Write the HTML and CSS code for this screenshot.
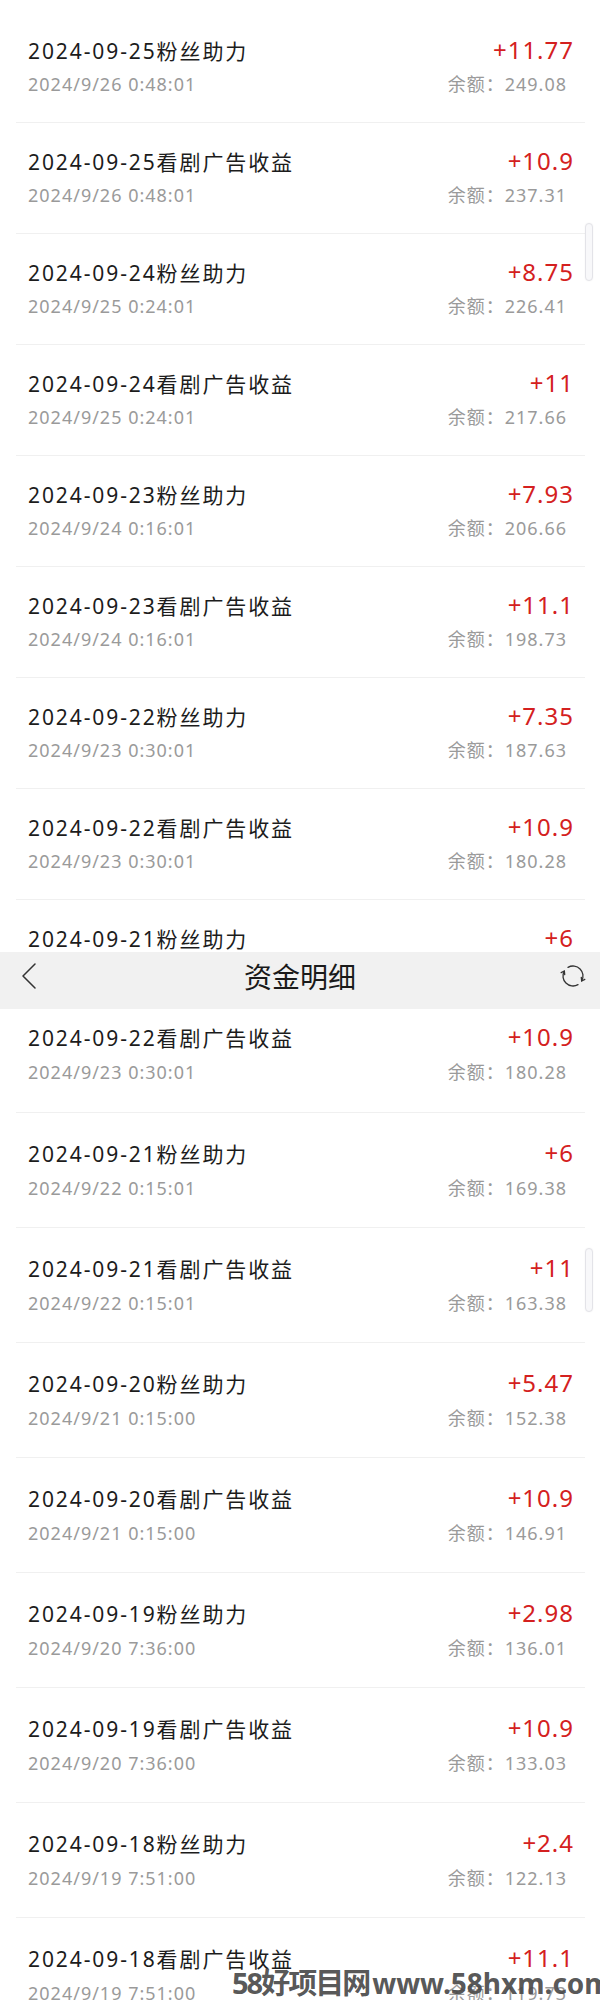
FILE: index.html
```html
<!DOCTYPE html>
<html lang="zh-CN">
<head>
<meta charset="UTF-8" />
<meta name="viewport" content="width=device-width, initial-scale=1" />
<title>资金明细</title>
<link rel="stylesheet" href="styles.css">
</head>
<body>
<div class="page">

  <!-- 上半截：列表滚动中 -->
  <section class="list-wrap list-top">
    <div class="scroll-thumb"></div>
    <ul class="list">
      <li class="item">
        <div class="item-head"><span class="item-title">2024-09-25粉丝助力</span><span class="item-amount">+11.77</span></div>
        <div class="item-meta"><span>2024/9/26 0:48:01</span><span class="item-balance">余额：249.08</span></div>
      </li>
      <li class="item">
        <div class="item-head"><span class="item-title">2024-09-25看剧广告收益</span><span class="item-amount">+10.9</span></div>
        <div class="item-meta"><span>2024/9/26 0:48:01</span><span class="item-balance">余额：237.31</span></div>
      </li>
      <li class="item">
        <div class="item-head"><span class="item-title">2024-09-24粉丝助力</span><span class="item-amount">+8.75</span></div>
        <div class="item-meta"><span>2024/9/25 0:24:01</span><span class="item-balance">余额：226.41</span></div>
      </li>
      <li class="item">
        <div class="item-head"><span class="item-title">2024-09-24看剧广告收益</span><span class="item-amount">+11</span></div>
        <div class="item-meta"><span>2024/9/25 0:24:01</span><span class="item-balance">余额：217.66</span></div>
      </li>
      <li class="item">
        <div class="item-head"><span class="item-title">2024-09-23粉丝助力</span><span class="item-amount">+7.93</span></div>
        <div class="item-meta"><span>2024/9/24 0:16:01</span><span class="item-balance">余额：206.66</span></div>
      </li>
      <li class="item">
        <div class="item-head"><span class="item-title">2024-09-23看剧广告收益</span><span class="item-amount">+11.1</span></div>
        <div class="item-meta"><span>2024/9/24 0:16:01</span><span class="item-balance">余额：198.73</span></div>
      </li>
      <li class="item">
        <div class="item-head"><span class="item-title">2024-09-22粉丝助力</span><span class="item-amount">+7.35</span></div>
        <div class="item-meta"><span>2024/9/23 0:30:01</span><span class="item-balance">余额：187.63</span></div>
      </li>
      <li class="item">
        <div class="item-head"><span class="item-title">2024-09-22看剧广告收益</span><span class="item-amount">+10.9</span></div>
        <div class="item-meta"><span>2024/9/23 0:30:01</span><span class="item-balance">余额：180.28</span></div>
      </li>
      <li class="item">
        <div class="item-head"><span class="item-title">2024-09-21粉丝助力</span><span class="item-amount">+6</span></div>
        <div class="item-meta"><span>2024/9/22 0:15:01</span><span class="item-balance">余额：169.38</span></div>
      </li>
    </ul>
  </section>

  <!-- 标题栏 -->
  <header class="nav-bar">
    <span class="nav-back">
      <svg width="14" height="26" viewBox="0 0 14 26" fill="none">
        <polyline points="13,1 1,13 13,25" stroke="#333" stroke-width="1.5" stroke-linecap="round" stroke-linejoin="round"/>
      </svg>
    </span>
    <h1 class="nav-title">资金明细</h1>
    <span class="nav-refresh">
      <svg width="28" height="28" viewBox="-1 -1 28 28" fill="none" stroke="#333" stroke-width="1.3" stroke-linecap="round" stroke-linejoin="round">
        <path d="M8 4.34 A10 10 0 0 1 21.66 18"/>
        <path d="M18 21.66 A10 10 0 0 1 4.34 8"/>
        <polyline points="1.2,9.6 4.34,8 4.7,11.6"/>
        <polyline points="24.8,16.4 21.66,18 21.3,14.4"/>
      </svg>
    </span>
  </header>

  <!-- 下半截 -->
  <section class="list-wrap list-bottom">
    <div class="scroll-thumb"></div>
    <ul class="list">
      <li class="item first">
        <div class="item-head"><span class="item-title">2024-09-22看剧广告收益</span><span class="item-amount">+10.9</span></div>
        <div class="item-meta"><span>2024/9/23 0:30:01</span><span class="item-balance">余额：180.28</span></div>
      </li>
      <li class="item">
        <div class="item-head"><span class="item-title">2024-09-21粉丝助力</span><span class="item-amount">+6</span></div>
        <div class="item-meta"><span>2024/9/22 0:15:01</span><span class="item-balance">余额：169.38</span></div>
      </li>
      <li class="item">
        <div class="item-head"><span class="item-title">2024-09-21看剧广告收益</span><span class="item-amount">+11</span></div>
        <div class="item-meta"><span>2024/9/22 0:15:01</span><span class="item-balance">余额：163.38</span></div>
      </li>
      <li class="item">
        <div class="item-head"><span class="item-title">2024-09-20粉丝助力</span><span class="item-amount">+5.47</span></div>
        <div class="item-meta"><span>2024/9/21 0:15:00</span><span class="item-balance">余额：152.38</span></div>
      </li>
      <li class="item">
        <div class="item-head"><span class="item-title">2024-09-20看剧广告收益</span><span class="item-amount">+10.9</span></div>
        <div class="item-meta"><span>2024/9/21 0:15:00</span><span class="item-balance">余额：146.91</span></div>
      </li>
      <li class="item">
        <div class="item-head"><span class="item-title">2024-09-19粉丝助力</span><span class="item-amount">+2.98</span></div>
        <div class="item-meta"><span>2024/9/20 7:36:00</span><span class="item-balance">余额：136.01</span></div>
      </li>
      <li class="item">
        <div class="item-head"><span class="item-title">2024-09-19看剧广告收益</span><span class="item-amount">+10.9</span></div>
        <div class="item-meta"><span>2024/9/20 7:36:00</span><span class="item-balance">余额：133.03</span></div>
      </li>
      <li class="item">
        <div class="item-head"><span class="item-title">2024-09-18粉丝助力</span><span class="item-amount">+2.4</span></div>
        <div class="item-meta"><span>2024/9/19 7:51:00</span><span class="item-balance">余额：122.13</span></div>
      </li>
      <li class="item">
        <div class="item-head"><span class="item-title">2024-09-18看剧广告收益</span><span class="item-amount">+11.1</span></div>
        <div class="item-meta"><span>2024/9/19 7:51:00</span><span class="item-balance">余额：119.73</span></div>
      </li>
    </ul>
  </section>

  <!-- 水印 -->
  <div class="watermark"><span class="watermark-cn">58好项目网</span>www.58hxm.com</div>
</div>
</body>
</html>
```

FILE: styles.css
```css
/* Reset básico */
* {
  margin: 0;
  padding: 0;
  box-sizing: border-box;
}
body {
  font-family: "Noto Sans", "Noto Sans CJK SC", sans-serif;
  background: #fff;
  color: #1c1c1c;
}

.page {
  position: relative;
  height: 2000px;
  overflow: hidden;
}

/* Listas */
.list-wrap {
  position: relative;
  overflow: hidden;
}
.list-top {
  height: 952px;
  padding-top: 12px;
}
.list {
  list-style: none;
  margin: 0 15px 0 16px;
}

.item {
  height: 111px;
  padding: 23px 12px 0;
  border-bottom: 1px solid #f0f0f0;
}
.list-bottom .item {
  height: 115px;
  padding-top: 25px;
}
.list-bottom .item.first {
  height: 104px;
  padding-top: 13px;
}

.item-head {
  display: flex;
  justify-content: space-between;
  align-items: baseline;
  line-height: 30px;
}
.item-title {
  font-size: 21px;
  letter-spacing: 1.9px;
  color: #1c1c1c;
}
.item-amount {
  font-size: 24px;
  letter-spacing: 1px;
  margin-right: -1px;
  color: #d42020;
}

.item-meta {
  display: flex;
  justify-content: space-between;
  margin-top: 6px;
  font-size: 18px;
  line-height: 24px;
  letter-spacing: 1px;
  color: #9a9a9a;
}
.list-bottom .item-meta {
  margin-top: 7px;
}
.item-balance {
  margin-right: 6px;
}

/* Barra de scroll */
.scroll-thumb {
  position: absolute;
  right: 7px;
  top: 223px;
  width: 8px;
  height: 58px;
  background: #f8f8fa;
  border: 1px solid #e3e3e8;
  border-radius: 4px;
  box-shadow: 0 0 2px rgba(0, 0, 0, 0.06);
}
.list-bottom .scroll-thumb {
  top: 239px;
  height: 64px;
}

/* Cabecera */
.nav-bar {
  display: grid;
  grid-template-columns: 70px 1fr 70px;
  align-items: center;
  height: 57px;
  padding-bottom: 10px;
  background: #f1f1f1;
}
.nav-back {
  justify-self: start;
  display: flex;
  padding-left: 22px;
}
.nav-title {
  text-align: center;
  font-family: "Noto Sans CJK SC", sans-serif;
  font-size: 28px;
  font-weight: 400;
  line-height: 36px;
  color: #1a1a1a;
}
.nav-refresh {
  justify-self: end;
  display: flex;
  padding-right: 13px;
}

/* Marca de agua */
.watermark {
  position: absolute;
  left: 232px;
  top: 1965px;
  font-family: "Noto Sans", "Noto Sans CJK SC", sans-serif;
  font-size: 28px;
  font-weight: 700;
  line-height: 36px;
  white-space: nowrap;
  color: rgba(72, 72, 72, 0.92);
}
.watermark-cn {
  font-size: 29px;
  letter-spacing: -2px;
  margin-right: 3px;
}
```
